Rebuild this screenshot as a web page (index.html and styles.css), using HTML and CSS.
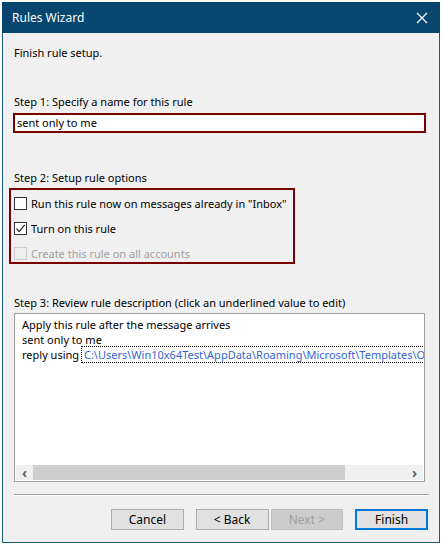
FILE: index.html
```html
<!DOCTYPE html>
<html lang="en">
<head>
    <meta charset="UTF-8">
    <title>Rules Wizard</title>
    <link rel="stylesheet" href="styles.css">
</head>
<body>
    <div class="window">
        <!-- Title bar -->
        <div class="titlebar">
            <span class="title">Rules Wizard</span>
            <svg class="close" width="12" height="12" viewBox="0 0 12 12">
                <path d="M1 1 L11 11 M11 1 L1 11" stroke="#fff" stroke-width="1.2" fill="none"/>
            </svg>
        </div>

        <div class="content">
            <p class="intro">Finish rule setup.</p>

            <p class="step step-1">Step 1: Specify a name for this rule</p>
            <div class="name-box">sent only to me</div>

            <p class="step step-2">Step 2: Setup rule options</p>
            <div class="options">
                <div class="option">
                    <span class="check"></span>
                    <span>Run this rule now on messages already in "Inbox"</span>
                </div>
                <div class="option">
                    <span class="check">
                        <svg width="11" height="11" viewBox="0 0 11 11">
                            <path d="M1.5 5.5 L4.2 8.5 L9.8 1.8" stroke="#333" stroke-width="1.2" fill="none"/>
                        </svg>
                    </span>
                    <span>Turn on this rule</span>
                </div>
                <div class="option disabled">
                    <span class="check"></span>
                    <span>Create this rule on all accounts</span>
                </div>
            </div>

            <p class="step step-3">Step 3: Review rule description (click an underlined value to edit)</p>
            <div class="desc">
                <div class="desc-text">
                    <div>Apply this rule after the message arrives</div>
                    <div>sent only to me</div>
                    <div class="nowrap">reply using <span class="link">C:\Users\Win10x64Test\AppData\Roaming\Microsoft\Templates\Out of Office.oft</span></div>
                </div>
                <div class="hscroll">
                    <span class="arrow">&#8249;</span>
                    <span class="track"><span class="thumb"></span></span>
                    <span class="arrow">&#8250;</span>
                </div>
            </div>

            <div class="separator"></div>

            <div class="buttons">
                <button class="btn">Cancel</button>
                <button class="btn back">&lt; Back</button>
                <button class="btn" disabled>Next &gt;</button>
                <button class="btn primary">Finish</button>
            </div>
        </div>
    </div>
</body>
</html>
```

FILE: styles.css
```css
/* General body styling */
body {
    margin: 0;
    background-color: #fff;
    font-family: "Noto Sans", "Open Sans", sans-serif;
    font-size: 11px;
    color: #000;
}

p {
    margin: 0;
}

/* Dialog window */
.window {
    margin: 2px 0 0 2px;
    width: 436px;
    height: 540px;
    border: 1px solid #1b5b82;
    border-top: none;
    background-color: #f0f0f0;
    display: flex;
    flex-direction: column;
}

.titlebar {
    height: 31px;
    background-color: #07466f;
    margin: 0 -1px;
    display: flex;
    align-items: center;
    justify-content: space-between;
    padding: 0 12px 0 10px;
    color: #fff;
}

.title {
    font-size: 12px;
}

.close {
    margin-top: 1px;
}

.content {
    flex: 1;
    padding: 0 11px;
    line-height: 16px;
}

.intro {
    margin-top: 12px;
}

.step-1 {
    margin-top: 33px;
}

/* Rule name text box */
.name-box {
    margin-top: 3px;
    height: 16px;
    width: 407px;
    border: 2px solid #7b0000;
    background-color: #fff;
    padding-left: 2px;
    line-height: 16px;
    margin-left: -1px;
}

.step-2 {
    margin-top: 37px;
}

/* Options group */
.options {
    margin: 2px 0 0 -5px;
    width: 282px;
    height: 72px;
    border: 2px solid #7b0000;
}

.option {
    display: flex;
    align-items: center;
    height: 25px;
    padding-left: 3px;
    white-space: nowrap;
}

.option:first-child {
    margin-top: 1px;
}

.check {
    flex-shrink: 0;
    width: 11px;
    height: 11px;
    border: 1px solid #333;
    background-color: #fff;
    margin-right: 4px;
    display: flex;
    align-items: center;
    justify-content: center;
}

.option.disabled {
    color: #a0a0a0;
}

.option.disabled .check {
    border-color: #ccc;
    background-color: #f0f0f0;
}

.step-3 {
    margin-top: 31px;
}

/* Rule description box */
.desc {
    margin-top: 2px;
    width: 409px;
    height: 167px;
    border: 1px solid #a0a0a0;
    background-color: #fff;
    display: flex;
    flex-direction: column;
    overflow: hidden;
}

.desc-text {
    flex: 1;
    padding: 3px 0 0 7px;
    line-height: 15px;
}

.nowrap {
    white-space: nowrap;
}

.link {
    color: #3366cc;
    outline: 1px dotted #000;
    padding-left: 2px;
}

.hscroll {
    height: 15px;
    margin: 0 1px 1px 1px;
    background-color: #f0f0f0;
    display: flex;
    align-items: center;
}

.arrow {
    width: 17px;
    text-align: center;
    color: #606060;
    font-size: 14px;
    font-weight: bold;
    line-height: 15px;
}

.track {
    flex: 1;
    height: 15px;
}

.thumb {
    display: block;
    width: 312px;
    height: 15px;
    background-color: #cdcdcd;
}

.separator {
    margin-top: 12px;
    width: 415px;
    height: 1px;
    background-color: #a0a0a0;
    border-bottom: 1px solid #fff;
}

/* Bottom buttons */
.buttons {
    margin-top: 13px;
    display: flex;
    padding-left: 97px;
}

.btn {
    width: 73px;
    height: 21px;
    border: 1px solid #adadad;
    background-color: #e1e1e1;
    font-family: inherit;
    font-size: 12px;
    color: #000;
    padding: 0;
    margin-right: 12px;
}

.btn.back {
    margin-right: 2px;
}

.btn:disabled {
    background-color: #cccccc;
    border-color: #bfbfbf;
    color: #a0a0a0;
}

.btn.primary {
    border: 2px solid #0078d7;
    margin-right: 0;
}
```
